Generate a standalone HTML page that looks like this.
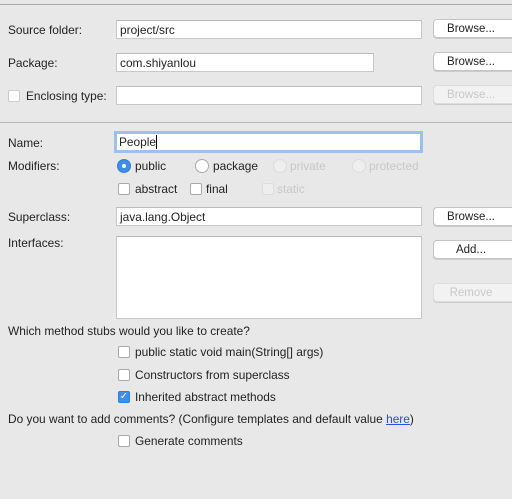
<!DOCTYPE html><html><head><style>
body{margin:0;width:512px;height:499px;background:#e8e8e8;font-family:"Liberation Sans",sans-serif;font-size:11.9px;color:#222;position:relative;overflow:hidden}
.a{position:absolute;white-space:nowrap}
.in{position:absolute;background:#fff;border:1px solid #c8c8c8;border-top-color:#bbb;box-sizing:border-box;padding:0 0 0 3px;line-height:18px}
.btn{position:absolute;left:433px;width:90px;height:19px;background:#fff;border:1px solid #c4c4c4;border-radius:4px;box-sizing:border-box;text-align:center;line-height:19px;box-shadow:0 1px 0 #ccc;padding-right:14px;font-size:11.5px}
.dis{color:#c8c8c8;background:#f2f2f2;border-color:#ddd}
.cb{position:absolute;width:12px;height:12px;background:#fff;border:1px solid #aaa;border-radius:2px;box-sizing:border-box}
.rd{position:absolute;width:14px;height:14px;background:#fff;border:1px solid #aaa;border-radius:50%;box-sizing:border-box}
.g{color:#c8c8c8}
</style></head><body>
<div class="a" style="left:0;top:4px;width:512px;height:1px;background:#aaa"></div>
<div class="a" style="left:8px;top:23px">Source folder:</div>
<div class="in" style="left:116px;top:20px;width:306px;height:19px">project/src</div>
<div class="btn" style="top:19px">Browse...</div>
<div class="a" style="left:8px;top:56px">Package:</div>
<div class="in" style="left:116px;top:53px;width:258px;height:19px">com.shiyanlou</div>
<div class="btn" style="top:52px">Browse...</div>
<div class="cb" style="left:8px;top:90px;border-color:#ccc"></div>
<div class="a" style="left:26px;top:89px">Enclosing type:</div>
<div class="in" style="left:116px;top:86px;width:306px;height:19px"></div>
<div class="btn dis" style="top:85px">Browse...</div>
<div class="a" style="left:0;top:122px;width:512px;height:1px;background:#b8b8b8"></div>
<div class="a" style="left:8px;top:136px">Name:</div>
<div class="in" style="left:114px;top:131px;width:309px;height:22px;border:3px solid #9cc2ec;line-height:16px;padding-left:2px">People<span style="border-left:1px solid #000;margin-left:0"></span></div>
<div class="a" style="left:8px;top:159px">Modifiers:</div>
<div class="rd" style="left:117px;top:159px;background:#3d8ee8;border-color:#2f7fd8"><div style="position:absolute;left:4px;top:4px;width:4px;height:4px;border-radius:50%;background:#fff"></div></div>
<div class="a" style="left:135px;top:159px">public</div>
<div class="rd" style="left:195px;top:159px"></div>
<div class="a" style="left:213px;top:159px">package</div>
<div class="rd" style="left:273px;top:159px;border-color:#ddd;background:#eee"></div>
<div class="a g" style="left:290px;top:159px">private</div>
<div class="rd" style="left:352px;top:159px;border-color:#ddd;background:#eee"></div>
<div class="a g" style="left:369px;top:159px">protected</div>
<div class="cb" style="left:118px;top:183px"></div>
<div class="a" style="left:135px;top:182px">abstract</div>
<div class="cb" style="left:190px;top:183px"></div>
<div class="a" style="left:206px;top:182px">final</div>
<div class="cb" style="left:262px;top:183px;border-color:#ddd;background:#eee"></div>
<div class="a g" style="left:277px;top:182px">static</div>
<div class="a" style="left:8px;top:210px">Superclass:</div>
<div class="in" style="left:116px;top:207px;width:306px;height:19px">java.lang.Object</div>
<div class="btn" style="top:207px">Browse...</div>
<div class="a" style="left:8px;top:236px">Interfaces:</div>
<div class="in" style="left:116px;top:236px;width:306px;height:83px"></div>
<div class="btn" style="top:240px">Add...</div>
<div class="btn dis" style="top:283px">Remove</div>
<div class="a" style="left:8px;top:324px">Which method stubs would you like to create?</div>
<div class="cb" style="left:118px;top:346px"></div>
<div class="a" style="left:135px;top:345px">public static void main(String[] args)</div>
<div class="cb" style="left:118px;top:369px"></div>
<div class="a" style="left:135px;top:368px">Constructors from superclass</div>
<div class="cb" style="left:118px;top:391px;background:#3d8ee8;border-color:#2f7fd8;color:#fff;font-size:10px;line-height:10px;text-align:center">✓</div>
<div class="a" style="left:135px;top:390px">Inherited abstract methods</div>
<div class="a" style="left:8px;top:412px">Do you want to add comments? (Configure templates and default value <span style="color:#2a4ed8;text-decoration:underline">here</span>)</div>
<div class="cb" style="left:118px;top:435px"></div>
<div class="a" style="left:135px;top:434px">Generate comments</div>
</body></html>
